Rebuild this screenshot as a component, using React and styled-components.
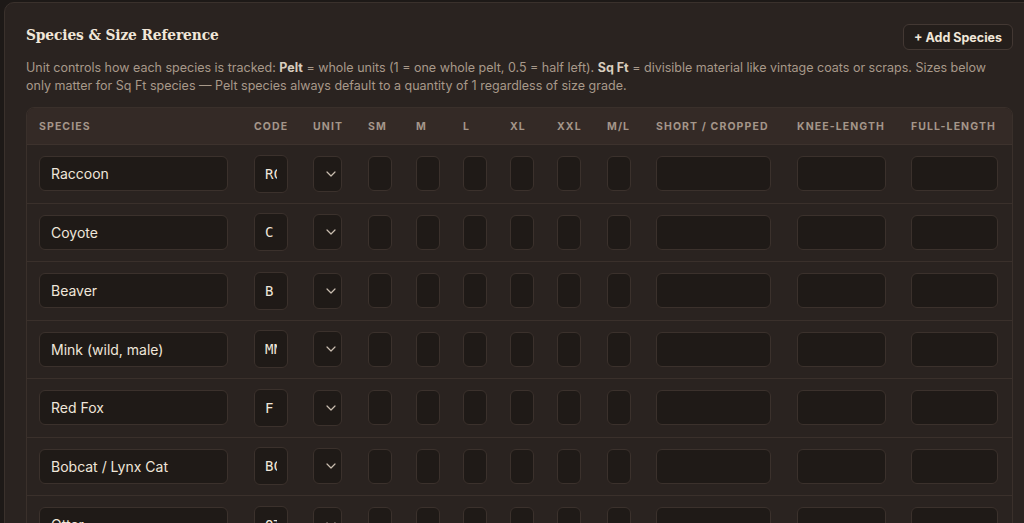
import React from "react";
import styled, { createGlobalStyle } from "styled-components";

const GlobalStyle = createGlobalStyle`
  html, body {
    margin: 0;
    padding: 0;
    background: #1d1917;
    overflow: hidden;
  }
  body {
    font-family: "Inter", "Liberation Sans", sans-serif;
    color: #efe6da;
  }
  * { box-sizing: border-box; }
`;

const COLUMNS = [
  { key: "species", label: "Species", width: 215, input: 189 },
  { key: "code", label: "Code", width: 59, input: 34 },
  { key: "unit", label: "Unit", width: 55, input: 29 },
  { key: "sm", label: "SM", width: 48, input: 22 },
  { key: "m", label: "M", width: 47, input: 21 },
  { key: "l", label: "L", width: 47, input: 22 },
  { key: "xl", label: "XL", width: 47, input: 22 },
  { key: "xxl", label: "XXL", width: 50, input: 24 },
  { key: "ml", label: "M/L", width: 49, input: 24 },
  { key: "short", label: "Short / Cropped", width: 141, input: 115 },
  { key: "knee", label: "Knee-Length", width: 114, input: 89 },
  { key: "full", label: "Full-Length", width: 113, input: 87 },
];

const GRID = COLUMNS.map((c) => `${c.width}px`).join(" ");

const SPECIES = [
  { name: "Raccoon", code: "RC" },
  { name: "Coyote", code: "C" },
  { name: "Beaver", code: "B" },
  { name: "Mink (wild, male)", code: "MN" },
  { name: "Red Fox", code: "F" },
  { name: "Bobcat / Lynx Cat", code: "BC" },
  { name: "Otter", code: "OT" },
  { name: "Muskrat", code: "MR" },
];

const Page = styled.div`
  padding: 2px 0 0 4px;
`;

const Panel = styled.section`
  width: 1031px;
  min-height: 560px;
  background: #2a2320;
  border: 1px solid #3a312c;
  border-radius: 10px;
  padding: 21px 21px 0 21px;
`;

const HeaderBar = styled.div`
  display: flex;
  align-items: flex-start;
  justify-content: space-between;
  height: 26px;
`;

const Title = styled.h2`
  margin: 0;
  line-height: 22px;
  font-family: "DejaVu Serif Condensed", "DejaVu Serif", "Liberation Serif", serif;
  font-stretch: condensed;
  font-weight: 700;
  font-size: 15.3px;
  letter-spacing: -0.1px;
  color: #f1e7d9;
`;

const AddButton = styled.button`
  height: 26px;
  padding: 0 10px;
  background: #241e1b;
  border: 1px solid #433833;
  border-radius: 6px;
  color: #f1e7d9;
  font-family: "Inter", "Liberation Sans", sans-serif;
  font-weight: 700;
  font-size: 12.5px;
`;

const Description = styled.p`
  margin: 9px 0 0 0;
  font-size: 12.5px;
  line-height: 18px;
  color: #a8998a;
  b {
    color: #d9cdbf;
    font-weight: 700;
  }
`;

const TableWrap = styled.div`
  margin-top: 12px;
  width: 987px;
  border: 1px solid #3a302b;
  border-radius: 8px 8px 0 0;
  overflow: hidden;
`;

const HeadRow = styled.div`
  display: grid;
  grid-template-columns: ${GRID};
  height: 37px;
  align-items: center;
  background: #342a26;
  border-bottom: 1px solid #3d322d;
`;

const HeadCell = styled.div`
  padding: 0 12px;
  font-size: 10.5px;
  font-weight: 700;
  letter-spacing: 1.1px;
  text-transform: uppercase;
  white-space: nowrap;
  color: #a4968a;
`;

const Row = styled.div`
  display: grid;
  grid-template-columns: ${GRID};
  align-items: center;
  height: 58.5px;
  border-bottom: 1px solid #3a302b;
  background: #2a2320;
`;

const Cell = styled.div`
  padding: 0 12px;
  display: flex;
  align-items: center;
`;

const Field = styled.input`
  width: ${(p) => p.$w}px;
  height: 35px;
  padding: 0 11px;
  background: #1f1a17;
  border: 1px solid #3b312c;
  border-radius: 6px;
  color: #efe6da;
  font-family: "Inter", "Liberation Sans", sans-serif;
  font-size: 14px;
  outline: none;
`;

const CodeField = styled(Field)`
  height: 38px;
  padding: 0 10px;
  font-family: "DejaVu Sans Mono", "Liberation Mono", monospace;
  font-size: 14px;
`;

const UnitSelect = styled.div`
  width: ${(p) => p.$w}px;
  height: 36px;
  display: flex;
  align-items: center;
  justify-content: flex-end;
  padding-right: 5px;
  background: #1f1a17;
  border: 1px solid #3b312c;
  border-radius: 6px;
  color: #c9bdb0;
`;

function Chevron() {
  return (
    <svg width="10" height="6" viewBox="0 0 10 6" fill="none">
      <path d="M1 1l4 4 4-4" stroke="currentColor" strokeWidth="1.2" strokeLinecap="round" strokeLinejoin="round" />
    </svg>
  );
}

function SpeciesRow({ item }) {
  return (
    <Row>
      {COLUMNS.map((c) => {
        if (c.key === "species")
          return (
            <Cell key={c.key}>
              <Field $w={c.input} defaultValue={item.name} />
            </Cell>
          );
        if (c.key === "code")
          return (
            <Cell key={c.key}>
              <CodeField $w={c.input} defaultValue={item.code} />
            </Cell>
          );
        if (c.key === "unit")
          return (
            <Cell key={c.key}>
              <UnitSelect $w={c.input}>
                <Chevron />
              </UnitSelect>
            </Cell>
          );
        return (
          <Cell key={c.key}>
            <Field $w={c.input} />
          </Cell>
        );
      })}
    </Row>
  );
}

export default function App() {
  return (
    <>
      <GlobalStyle />
      <Page>
        <Panel>
          <HeaderBar>
            <Title>Species &amp; Size Reference</Title>
            <AddButton>+ Add Species</AddButton>
          </HeaderBar>
          <Description>
            Unit controls how each species is tracked: <b>Pelt</b> = whole units (1 = one whole pelt, 0.5 = half left).{" "}
            <b>Sq Ft</b> = divisible material like vintage coats or scraps. Sizes below only matter for Sq Ft species — Pelt
            species always default to a quantity of 1 regardless of size grade.
          </Description>
          <TableWrap>
            <HeadRow>
              {COLUMNS.map((c) => (
                <HeadCell key={c.key}>{c.label}</HeadCell>
              ))}
            </HeadRow>
            {SPECIES.map((s) => (
              <SpeciesRow key={s.name} item={s} />
            ))}
          </TableWrap>
        </Panel>
      </Page>
    </>
  );
}
